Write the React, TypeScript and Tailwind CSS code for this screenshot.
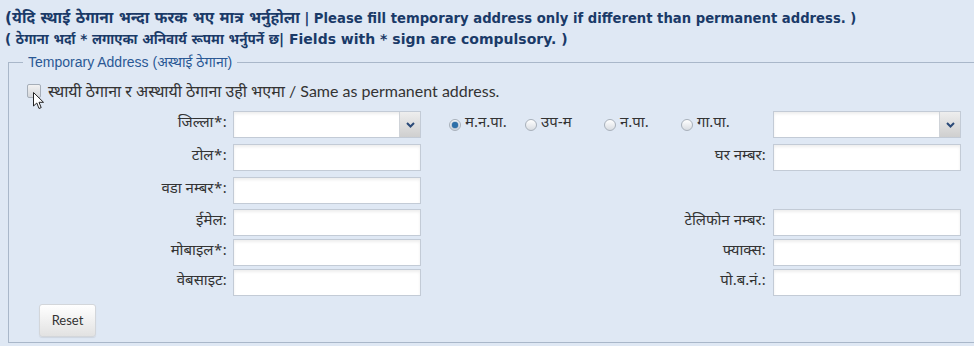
import React from 'react';

const deva = "font-['Noto_Sans_Devanagari','Lohit_Devanagari','Liberation_Serif',serif]";

function TextBox() {
  return (
    <div className="h-[27px] w-[188px] border border-[#c3cbd6] bg-white shadow-[inset_0_2px_3px_rgba(0,0,0,0.07)]" />
  );
}

function SelectBox() {
  return (
    <div className="flex h-[27px] w-[188px] border border-[#c3cbd6] bg-white shadow-[inset_0_2px_3px_rgba(0,0,0,0.07)]">
      <div className="flex-1" />
      <div className="flex w-[21px] items-center justify-center border-l border-[#cfd3d8] bg-gradient-to-b from-[#eeeeee] to-[#cfcfcf]">
        <svg width="9" height="6" viewBox="0 0 9 6">
          <path d="M1 1 L4.5 4.5 L8 1" fill="none" stroke="#2b4a78" strokeWidth="2" />
        </svg>
      </div>
    </div>
  );
}

function Radio({ checked, label, className }: { checked?: boolean; label: string; className?: string }) {
  return (
    <div className={`flex items-center ${className ?? ''}`}>
      <span className="flex h-[12px] w-[12px] shrink-0 items-center justify-center rounded-full border border-[#a8b0ba] bg-gradient-to-b from-[#ffffff] to-[#d9dde2]">
        {checked && <span className="h-[6px] w-[6px] rounded-full bg-[#2d6fa8] shadow-[0_0_2px_#1b4f86]" />}
      </span>
      <span className={`ml-[4px] text-[15px] text-[#333] ${deva}`}>{label}</span>
    </div>
  );
}

function Label({ text, className }: { text: string; className?: string }) {
  return <div className={`text-right text-[15px] text-[#333] ${deva} ${className ?? ''}`}>{text}</div>;
}

function Row({ left, right, middle, className }: { left: string; right?: string; middle?: React.ReactNode; className?: string }) {
  return (
    <div className={`flex h-[27px] items-center ${className ?? ''}`}>
      <Label text={left} className="w-[224px] pr-[6px]" />
      {middle ? <SelectBox /> : <TextBox />}
      <div className="flex h-full flex-1 items-center justify-end pr-[7px]">
        {middle ? <div className="flex w-full items-center">{middle}</div> : right ? <Label text={right} /> : null}
      </div>
      {(right || middle) ? middle ? <SelectBox /> : <TextBox /> : <div className="w-[188px]" />}
      <div className="w-[13px]" />
    </div>
  );
}

export default function App() {
  return (
    <div className="relative h-[346px] w-[974px] overflow-hidden bg-[#dfe8f4]">
      <div className="pl-[5px] pt-[8px] font-bold leading-[20px] text-[#1a3a68] font-['DejaVu_Sans','Noto_Sans_Devanagari',sans-serif]">
        <div className="whitespace-nowrap">
          <span className="text-[15.5px]">(येदि स्थाई ठेगाना भन्दा फरक भए मात्र भर्नुहोला</span>
          <span className="text-[13.2px]"> | Please fill temporary address only if different than permanent address. )</span>
        </div>
        <div className="whitespace-nowrap">
          <span className="text-[13.5px]">( ठेगाना भर्दा * लगाएका अनिवार्य रूपमा भर्नुपर्ने छ</span>
          <span className="text-[14px]">| Fields with * sign are compulsory. )</span>
        </div>
      </div>

      <fieldset className="ml-[8px] mt-[5px] border border-r-0 border-[#a9b7c9] pb-[5px]">
        <legend className="ml-[14px] px-[5px] text-[14px] leading-[16px] text-[#2a5894] font-['Liberation_Sans','Noto_Sans_Devanagari',sans-serif]">
          Temporary Address (अस्थाई ठेगाना)
        </legend>

        <div className="mt-[11px] flex h-[20px] items-center pl-[18px]">
          <span className="h-[14px] w-[14px] rounded-[2px] border border-[#a6aeb8] bg-gradient-to-b from-[#f2f2f2] to-[#d4d7db]" />
          <span className={`ml-[7px] text-[16px] text-[#333] font-['Lato','Noto_Sans_Devanagari',sans-serif]`}>
            स्थायी ठेगाना र अस्थायी ठेगाना उही भएमा / Same as permanent address.
          </span>
        </div>

        <Row
          className="mt-[10px]"
          left="जिल्ला*:"
          middle={
            <>
              <Radio checked label="म.न.पा." className="ml-[28px] w-[76px]" />
              <Radio label="उप-म" className="w-[79px]" />
              <Radio label="न.पा." className="w-[77px]" />
              <Radio label="गा.पा." />
            </>
          }
        />
        <Row className="mt-[6px]" left="टोल*:" right="घर नम्बर:" />
        <Row className="mt-[6px]" left="वडा नम्बर*:" />
        <Row className="mt-[5px]" left="ईमेल:" right="टेलिफोन नम्बर:" />
        <Row className="mt-[3px]" left="मोबाइल*:" right="फ्याक्स:" />
        <Row className="mt-[3px]" left="वेबसाइट:" right="पो.ब.नं.:" />

        <div className="mt-[8px] pl-[30px]">
          <button className="h-[33px] w-[57px] rounded-[3px] border border-[#d3d6da] bg-gradient-to-b from-[#ffffff] to-[#e2e2e2] text-[13px] text-[#333] shadow-[0_1px_1px_rgba(0,0,0,0.08)] font-['Lato',sans-serif]">
            Reset
          </button>
        </div>
      </fieldset>

      <svg className="absolute left-[33px] top-[92px]" width="12" height="18" viewBox="0 0 12 18">
        <path d="M0.5 0.5 L0.5 14 L3.8 11 L6 16.5 L8.2 15.6 L6 10.3 L10.5 10.3 Z" fill="#fff" stroke="#222" strokeWidth="1" strokeLinejoin="round" />
      </svg>
    </div>
  );
}
